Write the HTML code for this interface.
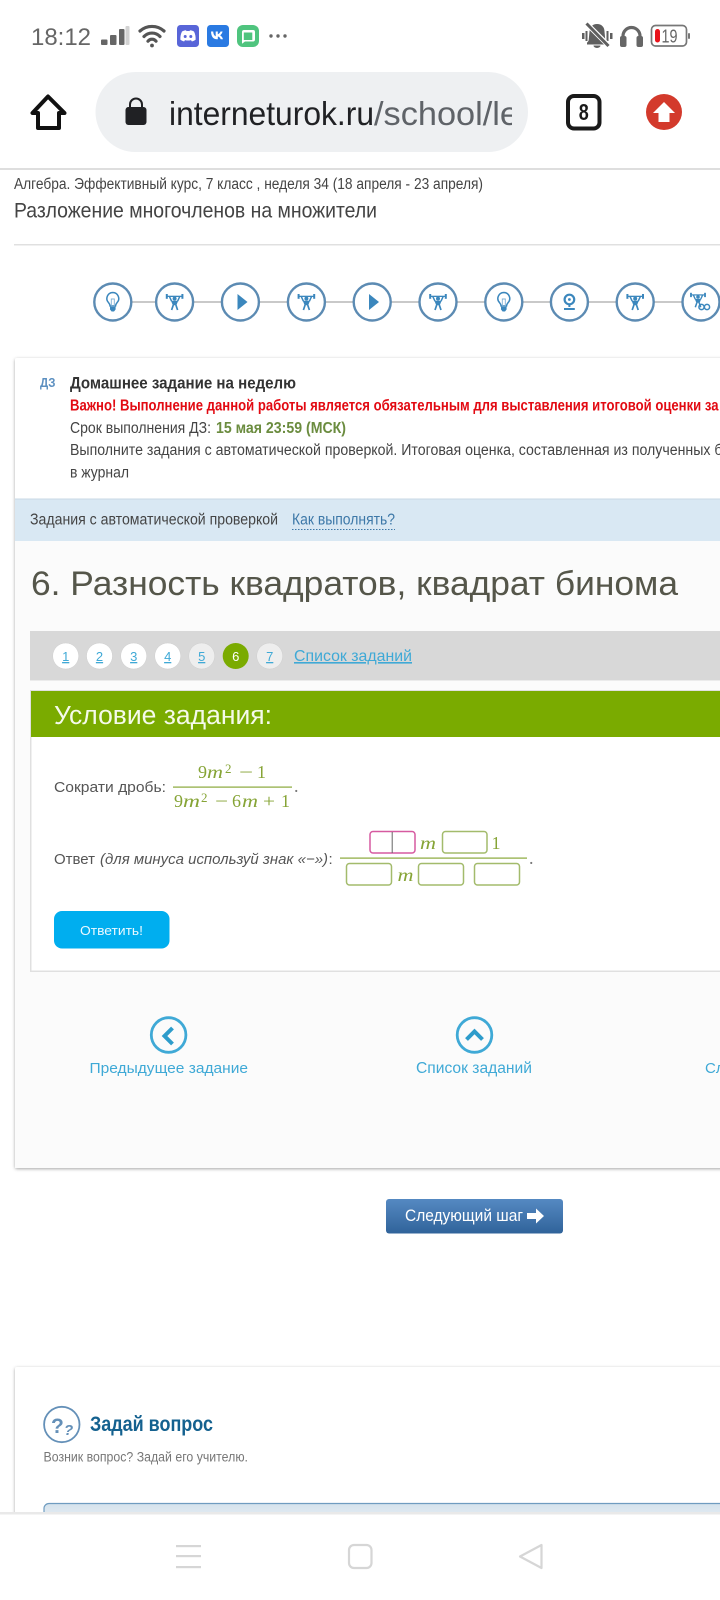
<!DOCTYPE html>
<html lang="ru"><head><meta charset="utf-8"><title>ИнтернетУрок</title>
<style>
html,body{margin:0;padding:0;background:#fff;width:720px;height:1600px;overflow:hidden}
svg{display:block}
text{font-family:"Liberation Sans",sans-serif}
.s{font-family:"Liberation Serif",serif;fill:#86a436;font-size:18px}
.i{font-style:italic}
</style></head><body>
<svg width="720" height="1600" viewBox="0 0 720 1600" xmlns="http://www.w3.org/2000/svg">
<defs>
<filter id="sh" x="-5%" y="-5%" width="110%" height="110%"><feDropShadow dx="0" dy="1" stdDeviation="1.5" flood-color="#000" flood-opacity=".35"/></filter>
<clipPath id="urlc"><rect x="160" y="80" width="352" height="60"/></clipPath>
<linearGradient id="btn" x1="0" y1="0" x2="0" y2="1"><stop offset="0" stop-color="#5589c2"/><stop offset="1" stop-color="#30639a"/></linearGradient>
<linearGradient id="inp" x1="0" y1="0" x2="0" y2="1"><stop offset="0" stop-color="#d5e2ec"/><stop offset="1" stop-color="#fff"/></linearGradient>
<g id="lift">
<rect x="-8.500" y="-6.300" width="17" height="1.300" fill="#3b87bd"/><rect x="-8.800" y="-8" width="2" height="4.800" fill="#3b87bd"/><rect x="6.800" y="-8" width="2" height="4.800" fill="#3b87bd"/>
<circle cx="0" cy="-3.400" r="2" fill="#3b87bd"/>
<path d="M-5.200-5.600 L-3-.8 M5.200-5.600 L3-.8" stroke="#3b87bd" stroke-width="1.500" fill="none"/>
<path d="M-3.600-1.200 H3.600 L1.800 3.200 H-1.800Z" fill="#3b87bd"/>
<path d="M-1.300 3 L-3 8 M1.300 3 L3 8" stroke="#3b87bd" stroke-width="1.700" fill="none"/>
</g>
<g id="bulb">
<path d="M0-9.500a6 6 0 0 1 4.200 10.200c-1 1.100-1.400 2-1.500 3.300H-2.700c-.1-1.300-.5-2.200-1.500-3.300A6 6 0 0 1 0-9.500Z" fill="none" stroke="#3b87bd" stroke-width="1.500"/>
<path d="M-1.500 4.500H1.500V-3H-1.500Z" fill="none" stroke="#7fb0d5" stroke-width=".9"/>
<path d="M-2.800 4.600H2.800V7.500L1.200 9.500H-1.200L-2.800 7.500Z" fill="#3b87bd"/>
</g>
<path id="play" d="M-4.500-8 L5.500 0 L-4.500 8Z" fill="#3b87bd"/>
</defs>

<!-- status bar -->
<text x="31" y="45" font-size="24" fill="#666" textLength="60" lengthAdjust="spacingAndGlyphs">18:12</text>
<g fill="#666"><rect x="101" y="39.500" width="6.500" height="5.500" rx="1"/><rect x="110" y="35" width="6.500" height="10" rx="1"/><rect x="119" y="29" width="5.500" height="16" rx="1"/></g>
<rect x="125.500" y="26" width="4" height="19" rx="1" fill="#d2d2d2"/>
<g fill="none" stroke="#555" stroke-width="3.200" stroke-linecap="round"><path d="M140 31a18 18 0 0 1 24 0"/><path d="M144 36.500a11 11 0 0 1 16 0"/><path d="M148 41.200a5 5 0 0 1 8 0"/></g><circle cx="152" cy="45.500" r="1.900" fill="#555"/>
<rect x="177" y="25" width="22" height="22" rx="3.500" fill="#5865d8"/>
<path d="M182 31.500c2-1 3.300-1.300 4-1.300l.5.900c1-.2 2-.2 3 0l.5-.9c.8 0 2.100.3 4 1.300 1.300 2.600 1.800 5.400 1.600 8.200-1.400 1-2.700 1.500-3.800 1.700l-.8-1.300c-2 .6-4 .6-6 0l-.8 1.300c-1.100-.2-2.400-.7-3.800-1.700-.2-2.800.3-5.600 1.600-8.200Z" fill="#fff"/>
<circle cx="185.200" cy="36.500" r="1.500" fill="#5865d8"/><circle cx="190.800" cy="36.500" r="1.500" fill="#5865d8"/>
<rect x="207" y="25" width="22" height="22" rx="3.500" fill="#2a7ae2"/>
<path d="M211 31.500h2.200c.2 3 1.400 4.500 2.500 4.700v-4.700h2.100v2.700c1.100-.1 2.200-1.400 2.700-2.700h2.100c-.4 1.800-1.600 3.200-2.600 3.800 1 .5 2.400 1.700 3 4h-2.300c-.5-1.500-1.600-2.700-2.900-2.800v2.800h-.7c-4 0-5.900-2.800-6.100-8Z" fill="#fff"/>
<rect x="237" y="25" width="22" height="22" rx="6" fill="#4fc47e"/>
<path d="M243 30h10a2 2 0 0 1 2 2v7.500a2 2 0 0 1-2 2h-8l-3 2.300v-11.800a2 2 0 0 1 2-2Zm.8 2.500v7.500h8.500v-7.500Z" fill="#fff" fill-rule="evenodd"/>
<g fill="#666"><circle cx="271" cy="36" r="1.700"/><circle cx="278" cy="36" r="1.700"/><circle cx="285" cy="36" r="1.700"/></g>

<g fill="#5f5f5f"><path d="M597 24c-4.500 0-7 3-7.500 7.500l-.8 8.500c-.2 1.300-1 2-1.700 2.600V44.500h20v-1.900c-.7-.6-1.500-1.300-1.700-2.600l-.8-8.500C604.500 27 601.500 24 597 24Z"/><path d="M593.500 45.500h7a3.500 2.500 0 0 1-7 0Z"/><rect x="582" y="33" width="2.500" height="6"/><rect x="585.500" y="31" width="2" height="10"/><rect x="606.500" y="31" width="2" height="10"/><rect x="610" y="33" width="2.500" height="6"/></g>
<path d="M585 22 L610 47" stroke="#fff" stroke-width="5"/><path d="M586.500 23.500 L608.500 46" stroke="#5f5f5f" stroke-width="3"/>
<path d="M623 42V36a8.500 8.500 0 0 1 17 0v6" fill="none" stroke="#666" stroke-width="3.200"/><rect x="620" y="36" width="6.500" height="11" rx="2" fill="#666"/><rect x="636.500" y="36" width="6.500" height="11" rx="2" fill="#666"/>
<rect x="651.500" y="25.500" width="35" height="20.500" rx="4" fill="none" stroke="#777" stroke-width="1.700"/><rect x="688" y="33" width="2" height="6" rx="1" fill="#777"/>
<rect x="655" y="29" width="5" height="13.500" rx="2.500" fill="#e8141c"/>
<text x="661.500" y="42.500" font-size="18" fill="#666" textLength="16" lengthAdjust="spacingAndGlyphs">19</text>

<!-- browser bar -->
<path d="M48 96.500 L32.500 113 H38 V128 H59 V113 H64.500 Z" fill="none" stroke="#111" stroke-width="4" stroke-linejoin="round"/>
<rect x="95.500" y="72" width="432.500" height="80" rx="40" fill="#eef0f2"/>
<rect x="125.500" y="107" width="21" height="18" rx="3" fill="#202124"/><path d="M130 108v-3.500a6 6 0 0 1 12 0V108" fill="none" stroke="#202124" stroke-width="2"/>
<g clip-path="url(#urlc)"><text x="169" y="125" font-size="33" fill="#202124" textLength="205" lengthAdjust="spacingAndGlyphs">interneturok.ru</text><text x="374" y="125" font-size="33" fill="#5f6368" textLength="145" lengthAdjust="spacingAndGlyphs">/school/le</text></g>
<rect x="568" y="96" width="31.500" height="32.500" rx="6" fill="none" stroke="#1a1a1a" stroke-width="4"/>
<text x="583.800" y="120" font-size="23" font-weight="bold" fill="#1a1a1a" text-anchor="middle" textLength="10" lengthAdjust="spacingAndGlyphs">8</text>
<circle cx="664" cy="112" r="18" fill="#d33a2c"/><path d="M664 102 L675 113 H669.500 V122 H658.500 V113 H653 Z" fill="#fff"/>
<rect x="0" y="168" width="720" height="2" fill="#dedede"/>

<!-- breadcrumbs -->
<text x="14" y="189" font-size="15.500" fill="#444" textLength="469" lengthAdjust="spacingAndGlyphs">Алгебра. Эффективный курс, 7 класс , неделя 34 (18 апреля - 23 апреля)</text>
<text x="14" y="217.500" font-size="21.500" fill="#444" textLength="363" lengthAdjust="spacingAndGlyphs">Разложение многочленов на множители</text>
<rect x="14" y="244" width="706" height="1.500" fill="#e0e0e0"/>

<!-- steps -->
<rect x="113" y="301" width="607" height="2" fill="#c9c9c9"/>
<g fill="#fff" stroke="#5c8bb3" stroke-width="2.400">
<circle cx="112.800" cy="302" r="18.500"/><circle cx="174.600" cy="302" r="18.500"/><circle cx="240.400" cy="302" r="18.500"/><circle cx="306.400" cy="302" r="18.500"/><circle cx="372.200" cy="302" r="18.500"/><circle cx="438" cy="302" r="18.500"/><circle cx="503.800" cy="302" r="18.500"/><circle cx="569.400" cy="302" r="18.500"/><circle cx="635.200" cy="302" r="18.500"/><circle cx="701" cy="302" r="18.500"/>
</g>
<use href="#bulb" x="112.800" y="302"/><use href="#lift" x="174.600" y="302"/><use href="#play" x="242" y="302"/><use href="#lift" x="306.400" y="302"/><use href="#play" x="373.500" y="302"/><use href="#lift" x="438" y="302"/><use href="#bulb" x="503.800" y="302"/>
<circle cx="569.400" cy="299.500" r="4.800" fill="none" stroke="#3b87bd" stroke-width="2.200"/><circle cx="569.400" cy="299.500" r="1.400" fill="#3b87bd"/><path d="M569.400 304.500V307M564 309h10.800" stroke="#3b87bd" stroke-width="2" fill="none"/>
<use href="#lift" x="635.200" y="302"/>
<g transform="translate(698 300) scale(.9)"><use href="#lift"/></g>
<g fill="none" stroke="#3b87bd" stroke-width="1.500"><circle cx="701.500" cy="307" r="2.600"/><circle cx="707" cy="307" r="2.600"/></g>

<!-- main card -->
<rect x="15" y="358" width="760" height="810" fill="#fff" filter="url(#sh)" rx="2"/>
<text x="40" y="387" font-size="13" font-weight="bold" fill="#5b8fc0" textLength="15.500" lengthAdjust="spacingAndGlyphs">ДЗ</text>
<text x="70" y="388.500" font-size="17" font-weight="bold" fill="#333" textLength="226" lengthAdjust="spacingAndGlyphs">Домашнее задание на неделю</text>
<text x="70" y="410.500" font-size="15.500" font-weight="bold" fill="#e20a12" textLength="648.500" lengthAdjust="spacingAndGlyphs">Важно! Выполнение данной работы является обязательным для выставления итоговой оценки за</text>
<text x="70" y="433" font-size="15.500" fill="#444" textLength="141" lengthAdjust="spacingAndGlyphs">Срок выполнения ДЗ:</text>
<text x="216" y="433" font-size="15.500" font-weight="bold" fill="#6b8c3f" textLength="130" lengthAdjust="spacingAndGlyphs">15 мая 23:59 (МСК)</text>
<text x="70" y="455" font-size="15.500" fill="#444" textLength="660" lengthAdjust="spacingAndGlyphs">Выполните задания с автоматической проверкой. Итоговая оценка, составленная из полученных ба</text>
<text x="70" y="477.500" font-size="15.500" fill="#444" textLength="59" lengthAdjust="spacingAndGlyphs">в журнал</text>
<rect x="15" y="499" width="705" height="42" fill="#d9e8f3"/><rect x="15" y="498.500" width="705" height="1" fill="#c9d9e4"/>
<text x="30" y="524.500" font-size="15.500" fill="#444" textLength="248" lengthAdjust="spacingAndGlyphs">Задания с автоматической проверкой</text>
<text x="292" y="524.500" font-size="15.500" fill="#3d78a8" textLength="103" lengthAdjust="spacingAndGlyphs">Как выполнять?</text>
<line x1="292" y1="529.500" x2="395" y2="529.500" stroke="#3d78a8" stroke-width="1" stroke-dasharray="1.500 1.500"/>
<rect x="15" y="541" width="705" height="627" fill="#fbfbfb"/>
<text x="31" y="595" font-size="34" fill="#55564a" textLength="647" lengthAdjust="spacingAndGlyphs">6. Разность квадратов, квадрат бинома</text>

<!-- pagination -->
<rect x="30" y="631" width="690" height="49" fill="#d8d8d8"/><rect x="30" y="680" width="690" height="1" fill="#ebebeb"/>
<g stroke="#cfcfcf" stroke-width=".5">
<circle cx="65.700" cy="656" r="13" fill="#fff"/><circle cx="99.500" cy="656" r="13" fill="#fff"/><circle cx="133.700" cy="656" r="13" fill="#fff"/><circle cx="167.700" cy="656" r="13" fill="#fff"/><circle cx="201.700" cy="656" r="13" fill="#eee"/><circle cx="269.700" cy="656" r="13" fill="#eee"/></g>
<circle cx="235.700" cy="656" r="13" fill="#7aab00"/>
<g font-size="13" fill="#3fa9d6" text-anchor="middle" text-decoration="underline">
<text x="65.700" y="661">1</text><text x="99.500" y="661">2</text><text x="133.700" y="661">3</text><text x="167.700" y="661">4</text><text x="201.700" y="661">5</text><text x="269.700" y="661">7</text></g>
<text x="235.700" y="661" font-size="13" fill="#fff" text-anchor="middle">6</text>
<text x="294" y="661" font-size="16" fill="#3fa9d6" text-decoration="underline" textLength="118" lengthAdjust="spacingAndGlyphs">Список заданий</text>

<!-- task -->
<rect x="30" y="690" width="690" height="282" fill="#e0e0e0"/><rect x="31.500" y="737" width="689" height="233.500" fill="#fff"/>
<rect x="31" y="691" width="689" height="46" fill="#7aab00"/>
<text x="54" y="724" font-size="25.500" fill="#f5faea" textLength="218" lengthAdjust="spacingAndGlyphs">Условие задания:</text>
<text x="54" y="792" font-size="15" fill="#555" textLength="112" lengthAdjust="spacingAndGlyphs">Сократи дробь:</text>
<rect x="173" y="786.500" width="119" height="1.200" fill="#8aa83a"/>
<text class="s" x="198" y="778">9</text><text class="s i" x="207" y="778" textLength="16" lengthAdjust="spacingAndGlyphs">m</text><text class="s" x="225" y="773" style="font-size:13px">2</text><text class="s" x="239" y="778" textLength="14" lengthAdjust="spacingAndGlyphs">−</text><text class="s" x="257" y="778">1</text>
<text class="s" x="174" y="807">9</text><text class="s i" x="183" y="807" textLength="17" lengthAdjust="spacingAndGlyphs">m</text><text class="s" x="201" y="802" style="font-size:13px">2</text><text class="s" x="215" y="807" textLength="13" lengthAdjust="spacingAndGlyphs">−</text><text class="s" x="232" y="807">6</text><text class="s i" x="242" y="807" textLength="16" lengthAdjust="spacingAndGlyphs">m</text><text class="s" x="263" y="807" textLength="12" lengthAdjust="spacingAndGlyphs">+</text><text class="s" x="281" y="807">1</text>
<text class="s" x="294" y="792" style="fill:#777">.</text>

<text x="54" y="864" font-size="15" fill="#555" textLength="41" lengthAdjust="spacingAndGlyphs">Ответ</text>
<text x="100" y="864" font-size="15" fill="#555" font-style="italic" textLength="228" lengthAdjust="spacingAndGlyphs">(для минуса используй знак «−»)</text>
<text x="328.500" y="864" font-size="15" fill="#555">:</text>
<rect x="340" y="857.500" width="187" height="1.200" fill="#8aa83a"/>
<g fill="#fff" stroke-width="1.500">
<rect x="370" y="831.500" width="45" height="21.500" rx="3" stroke="#d65aa0"/>
<rect x="442.500" y="831.500" width="44.500" height="21.500" rx="3" stroke="#a3bb6c"/>
<rect x="346.500" y="863.500" width="45" height="21.500" rx="3" stroke="#a3bb6c"/>
<rect x="418.500" y="863.500" width="45" height="21.500" rx="3" stroke="#a3bb6c"/>
<rect x="474.500" y="863.500" width="45" height="21.500" rx="3" stroke="#a3bb6c"/>
</g>
<rect x="391.700" y="832" width="1" height="21" fill="#666"/>
<text class="s i" x="420" y="849" textLength="16" lengthAdjust="spacingAndGlyphs">m</text><text class="s" x="491.500" y="849">1</text>
<text class="s i" x="397.500" y="881" textLength="16" lengthAdjust="spacingAndGlyphs">m</text>
<text class="s" x="529" y="864" style="fill:#777">.</text>
<rect x="54" y="911" width="115.500" height="37.500" rx="8" fill="#00aeef"/>
<text x="111.500" y="935" font-size="13" fill="#eaf8ff" text-anchor="middle" textLength="63" lengthAdjust="spacingAndGlyphs">Ответить!</text>

<!-- nav -->
<circle cx="168.600" cy="1035" r="17.300" fill="none" stroke="#3fa9d6" stroke-width="2.800"/>
<path d="M172.500 1028 L164.500 1036 L172.500 1044" fill="none" stroke="#2d9ccb" stroke-width="4"/>
<text x="89.500" y="1073" font-size="15" fill="#3fa9d6" textLength="158.500" lengthAdjust="spacingAndGlyphs">Предыдущее задание</text>
<circle cx="474.500" cy="1035" r="17.300" fill="none" stroke="#3fa9d6" stroke-width="2.800"/>
<path d="M466.500 1039.500 L474.500 1031.500 L482.500 1039.500" fill="none" stroke="#2d9ccb" stroke-width="4"/>
<text x="416" y="1073" font-size="15.500" fill="#3fa9d6" textLength="116" lengthAdjust="spacingAndGlyphs">Список заданий</text>
<text x="705" y="1073" font-size="15" fill="#3fa9d6">Сл</text>

<!-- next step -->
<rect x="386" y="1199" width="177" height="34.500" rx="3" fill="url(#btn)"/>
<text x="405" y="1221" font-size="17" fill="#fff" textLength="118" lengthAdjust="spacingAndGlyphs">Следующий шаг</text>
<path d="M527 1213h9v-4.500l8 7.500-8 7.500v-4.500h-9Z" fill="#fff"/>

<!-- ask card -->
<rect x="15" y="1367" width="760" height="240" fill="#fff" filter="url(#sh)" rx="2"/>
<circle cx="61.800" cy="1424.500" r="17.700" fill="none" stroke="#6490b8" stroke-width="1.800"/>
<text x="51" y="1433" font-size="21" font-weight="bold" fill="#6490b8">?</text><text x="64" y="1435" font-size="15" font-weight="bold" font-style="italic" fill="#6490b8">?</text>
<text x="90" y="1431" font-size="21.500" font-weight="bold" fill="#14618f" textLength="123" lengthAdjust="spacingAndGlyphs">Задай вопрос</text>
<text x="43.500" y="1461.500" font-size="13.500" fill="#777" textLength="204.500" lengthAdjust="spacingAndGlyphs">Возник вопрос? Задай его учителю.</text>
<rect x="44" y="1503.500" width="700" height="40" rx="5" fill="url(#inp)" stroke="#6f9cc0" stroke-width="1.200"/>

<!-- nav bar -->
<rect x="0" y="1512" width="720" height="88" fill="#fff"/><rect x="0" y="1512" width="720" height="2.500" fill="#e9e9e9"/>
<g fill="#d6d6d6"><rect x="176" y="1545" width="25" height="2.200"/><rect x="176" y="1555" width="25" height="2.200"/><rect x="176" y="1566" width="25" height="2.200"/></g>
<rect x="349" y="1545" width="22.500" height="23" rx="5" fill="none" stroke="#d6d6d6" stroke-width="2.200"/>
<path d="M541.500 1545 L520 1556.500 L541.500 1568 Z" fill="none" stroke="#d6d6d6" stroke-width="2.200" stroke-linejoin="round"/>
</svg>
</body></html>
